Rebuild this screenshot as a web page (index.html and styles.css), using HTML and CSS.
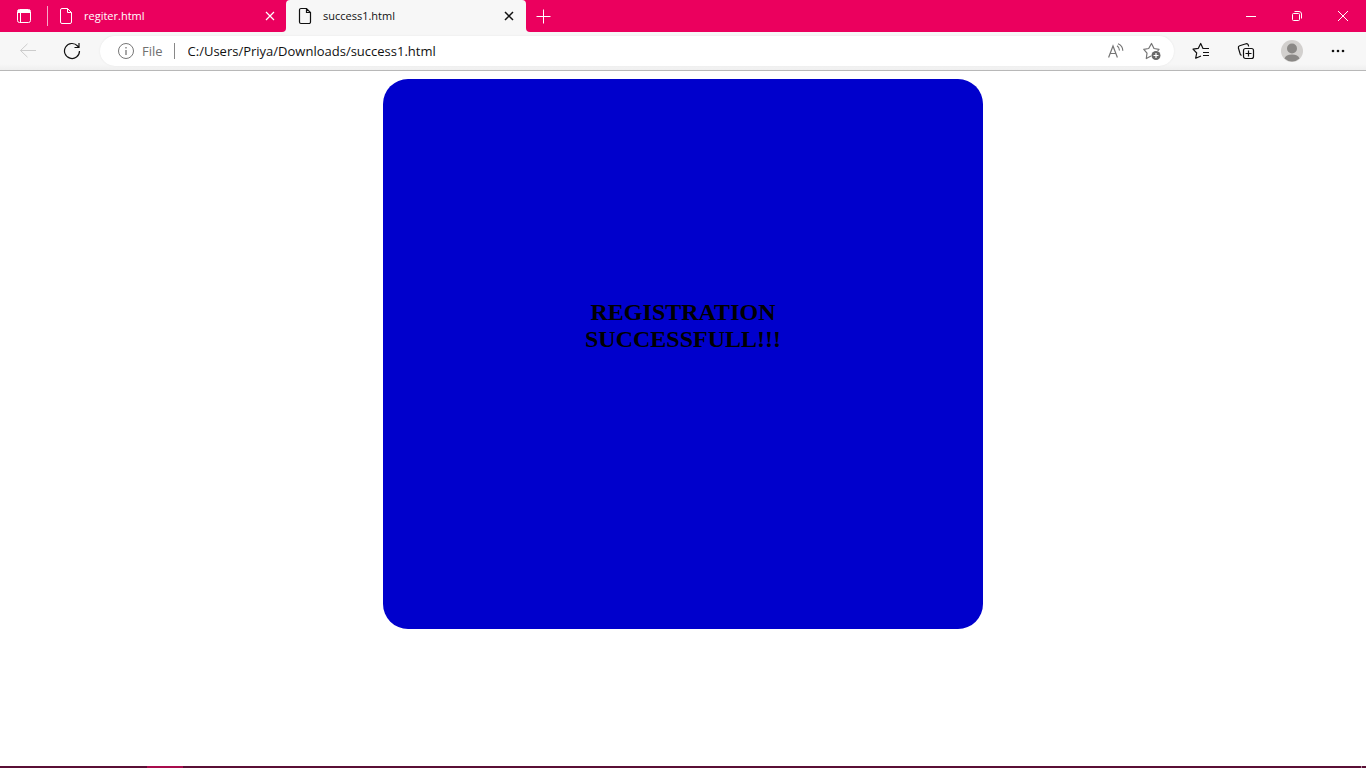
FILE: index.html
```html
<!DOCTYPE html>
<html lang="en">
<head>
<meta charset="utf-8">
<title>success1.html</title>
<link rel="stylesheet" href="styles.css">
</head>
<body>
<header>
  <div class="tabbar">
    <div class="tabs-left">
      <button class="icon-btn tab-actions" aria-label="Tab actions">
        <svg width="16" height="16" viewBox="0 0 16 16" fill="none" stroke="#fff"><rect x="1.5" y="1.5" width="13" height="13" rx="2"/><path d="M4.500 5V14.500"/><path d="M2 3.500H14" stroke-width="3"/></svg>
      </button>
      <span class="tab-divider"></span>
      <div class="tab">
        <svg width="14" height="18" viewBox="0 0 14 18" fill="none" stroke="currentColor"><path d="M3 1.500H8.500L12.500 5.500V15A1.500 1.500 0 0 1 11 16.500H3A1.500 1.500 0 0 1 1.500 15V3A1.500 1.500 0 0 1 3 1.500ZM8.500 1.500V5.500H12.500"/></svg>
        <a class="tab-title" href="#">regiter.html</a>
        <button class="icon-btn close" aria-label="Close tab"><svg width="10" height="10" viewBox="0 0 10 10" stroke="currentColor" stroke-width="1.200"><path d="M1 1L9 9M9 1L1 9"/></svg></button>
      </div>
    </div>
    <div class="active-wrap">
      <div class="tab active">
        <svg width="14" height="18" viewBox="0 0 14 18" fill="none" stroke="currentColor" stroke-width="1.200"><path d="M3 1.500H8.500L12.500 5.500V15A1.500 1.500 0 0 1 11 16.500H3A1.500 1.500 0 0 1 1.500 15V3A1.500 1.500 0 0 1 3 1.500ZM8.500 1.500V5.500H12.500"/></svg>
        <a class="tab-title" href="#">success1.html</a>
        <button class="icon-btn close" aria-label="Close tab"><svg width="10" height="10" viewBox="0 0 10 10" stroke="currentColor" stroke-width="1.500"><path d="M1 1L9 9M9 1L1 9"/></svg></button>
      </div>
    </div>
    <div class="tabs-right">
      <button class="icon-btn new-tab" aria-label="New tab"><svg width="15" height="15" viewBox="0 0 15 15" stroke="#fff"><path d="M7.500 0.500V14.500M0.500 7.500H14.500"/></svg></button>
      <div class="window-controls">
        <button class="icon-btn" aria-label="Minimize"><svg width="12" height="12" viewBox="0 0 12 12" stroke="#fff"><path d="M1 6.500H11"/></svg></button>
        <button class="icon-btn" aria-label="Restore"><svg width="12" height="12" viewBox="0 0 12 12" fill="none" stroke="#fff"><rect x="1.500" y="3.500" width="7" height="7" rx="1"/><path d="M3.500 1.500H8A2.500 2.500 0 0 1 10.500 4V8.500"/></svg></button>
        <button class="icon-btn" aria-label="Close"><svg width="12" height="12" viewBox="0 0 12 12" stroke="#fff"><path d="M1 1L11 11M11 1L1 11"/></svg></button>
      </div>
    </div>
  </div>
  <div class="toolbar">
    <div class="nav">
      <button class="icon-btn" aria-label="Back" disabled><svg width="18" height="16" viewBox="0 0 18 16" fill="none" stroke="#ccc"><path d="M17 7.500H1.500M8.500 0.800L1.500 7.500L8.500 14.200"/></svg></button>
      <button class="icon-btn" aria-label="Refresh"><svg width="18" height="18" viewBox="0 0 18 18" fill="none" stroke="#111" stroke-width="1.200"><path d="M16.500 9A7.500 7.500 0 1 1 14.600 4L16 5.500M16 1V5.500H11.500"/></svg></button>
    </div>
    <div class="address">
      <svg width="16" height="16" viewBox="0 0 16 16" fill="none" stroke="#777"><circle cx="8" cy="8" r="7.500"/><path d="M8 7V12M8 4V5.500" stroke-width="1.300"/></svg>
      <label class="scheme" for="url">File</label>
      <span class="address-divider"></span>
      <input class="url" id="url" type="text" value="C:/Users/Priya/Downloads/success1.html">
      <div class="address-actions">
        <button class="icon-btn" aria-label="Read aloud"><svg width="16" height="16" viewBox="0 0 16 16" fill="none" stroke="#757575" stroke-width="1.200"><path d="M0.600 14.500L5 3L9.400 14.500M2.300 10.500H7.800M9 2.800C10.600 3.800 11.500 5.300 11.500 7.500M10 0.700C13 2 14.800 4.300 14.800 7.700"/></svg></button>
        <button class="icon-btn" aria-label="Add to favorites"><svg width="18" height="18" viewBox="0 0 18 18" fill="none" stroke="#757575" stroke-width="1.200"><path d="M8 14L3.300 16.500L4 11.100L0.800 7.300L5.700 6.500L8.500 1.500L11 6.500L16 7.300L14.700 9" stroke-linejoin="round"/><circle cx="13" cy="13.500" r="4.500" fill="#666" stroke="none"/><path d="M13 11V16M10.500 13.500H15.500" stroke="#fff" stroke-width="1.200"/></svg></button>
      </div>
    </div>
    <div class="tools">
      <button class="icon-btn favorites" aria-label="Favorites"><svg width="18" height="18" viewBox="0 0 18 18" fill="none" stroke="#111" stroke-width="1.200"><path d="M9 14L3.700 16.200L4.700 11L1 7.200L6.200 6.400L8.700 1.500L11 6.500H17M11 10.500H17M11 13.500H17" stroke-linejoin="round"/></svg></button>
      <button class="icon-btn" aria-label="Collections"><svg width="18" height="18" viewBox="0 0 18 18" fill="none" stroke="#111" stroke-width="1.200"><path d="M4.500 13.500L3.300 12.500L1.400 6A2 2 0 0 1 2.700 3.700L9 1.800A2 2 0 0 1 11.300 3L11.600 4.500"/><rect x="6.500" y="6.500" width="10" height="10" rx="2"/><path d="M11.500 8.500V14.500M8.500 11.500H14.500"/></svg></button>
      <button class="icon-btn" aria-label="Profile"><svg width="22" height="22" viewBox="0 0 22 22"><circle cx="11" cy="11" r="11" fill="#d2d0ce"/><circle cx="11" cy="8.500" r="5" fill="#8a8886"/><path d="M3.500 18.500C4.300 16 7 14.500 11 14.500S17.700 16 18.500 18.500A11 11 0 0 1 3.500 18.500Z" fill="#8a8886"/></svg></button>
      <button class="icon-btn" aria-label="Settings and more"><svg width="14" height="4" viewBox="0 0 14 4" fill="#111"><circle cx="2" cy="2" r="1.300"/><circle cx="7" cy="2" r="1.300"/><circle cx="12" cy="2" r="1.300"/></svg></button>
    </div>
  </div>
</header>
<main>
  <section class="card">
    <h2>REGISTRATION SUCCESSFULL!!!</h2>
  </section>
</main>
<footer class="taskbar"><span class="running"></span><span class="desktop-edge"></span></footer>
</body>
</html>
```
FILE: styles.css
```css
* { box-sizing: border-box; }
body {
  margin: 0;
  min-height: 100vh;
  display: flex;
  flex-direction: column;
  background: #fff;
  font-family: "Open Sans", "Noto Sans", sans-serif;
}
svg { display: block; flex: none; }
.icon-btn {
  display: flex;
  align-items: center;
  justify-content: center;
  flex: none;
  padding: 0;
  border: 0;
  background: none;
  color: inherit;
}

/* Tab strip */
.tabbar { display: flex; height: 32px; background: #f7f7f7; }
.tabs-left {
  display: flex;
  align-items: center;
  width: 286px;
  background: #eb005e;
  border-bottom-right-radius: 4px;
}
.tab-actions { width: 47px; height: 32px; }
.tab-divider { width: 1px; height: 20px; background: #f9a8c8; }
.tab {
  display: flex;
  align-items: center;
  flex: 1;
  height: 32px;
  gap: 11px;
  padding: 0 8px 0 11px;
  color: #fff;
  font-size: 11px;
  font-weight: 500;
}
.tab-title { flex: 1; color: inherit; text-decoration: none; line-height: 16px; }
.close { width: 16px; height: 16px; }
.active-wrap {
  display: flex;
  width: 240px;
  background: linear-gradient(#eb005e 8px, #f7f7f7 8px);
}
.active {
  padding: 0 9px 0 12px;
  color: #111;
  font-weight: 400;
  background: #f7f7f7;
  border-radius: 4px 4px 0 0;
}
.tabs-right {
  display: flex;
  flex: 1;
  justify-content: space-between;
  background: #eb005e;
  border-bottom-left-radius: 4px;
}
.new-tab { width: 35px; }
.window-controls { display: flex; }
.window-controls .icon-btn { width: 46px; }

/* Address bar row */
.toolbar {
  display: flex;
  align-items: center;
  height: 39px;
  background: linear-gradient(#f7f7f7 32px, #efefef);
  border-bottom: 1px solid #b8b8b8;
}
.nav { display: flex; width: 100px; padding-left: 6px; }
.nav .icon-btn { width: 44px; height: 32px; }
.address {
  display: flex;
  align-items: center;
  flex: 1;
  height: 30px;
  padding: 0 13px 0 18px;
  background: #fff;
  border-radius: 15px;
  box-shadow: 0 0 2px #e4e4e4;
}
.scheme { margin-left: 8px; color: #707070; font-size: 13px; }
.address-divider { width: 1px; height: 16px; margin: 0 13px 0 11px; background: #888; }
.url {
  flex: 1;
  min-width: 0;
  padding: 0;
  border: 0;
  outline: 0;
  background: none;
  color: #111;
  font: 13px/20px "Open Sans", "Noto Sans", sans-serif;
}
.address-actions { display: flex; gap: 18px; }
.address-actions .icon-btn { width: 18px; height: 18px; }
.tools { display: flex; padding-left: 5px; padding-right: 5px; }
.tools .icon-btn { width: 46px; height: 32px; }
.tools .favorites { width: 44px; }

/* Page */
main { flex: 1; padding: 8px; }
.card {
  display: flex;
  justify-content: center;
  width: 100%;
  max-width: 600px;
  min-height: 550px;
  margin: 0 auto;
  padding: 220px 200px;
  background: #00c;
  border-radius: 25px;
}
h2 {
  margin: 0;
  color: #000;
  text-align: center;
  font: bold 24px/27px "Liberation Serif", serif;
}

/* Sliver of the desktop taskbar */
.taskbar {
  display: flex;
  justify-content: space-between;
  height: 2px;
  padding: 0 4px 0 147px;
  background: #5a0f35;
}
.running { width: 36px; background: #a80c4c; }
.desktop-edge { width: 1px; background: #b08a9c; }
```
